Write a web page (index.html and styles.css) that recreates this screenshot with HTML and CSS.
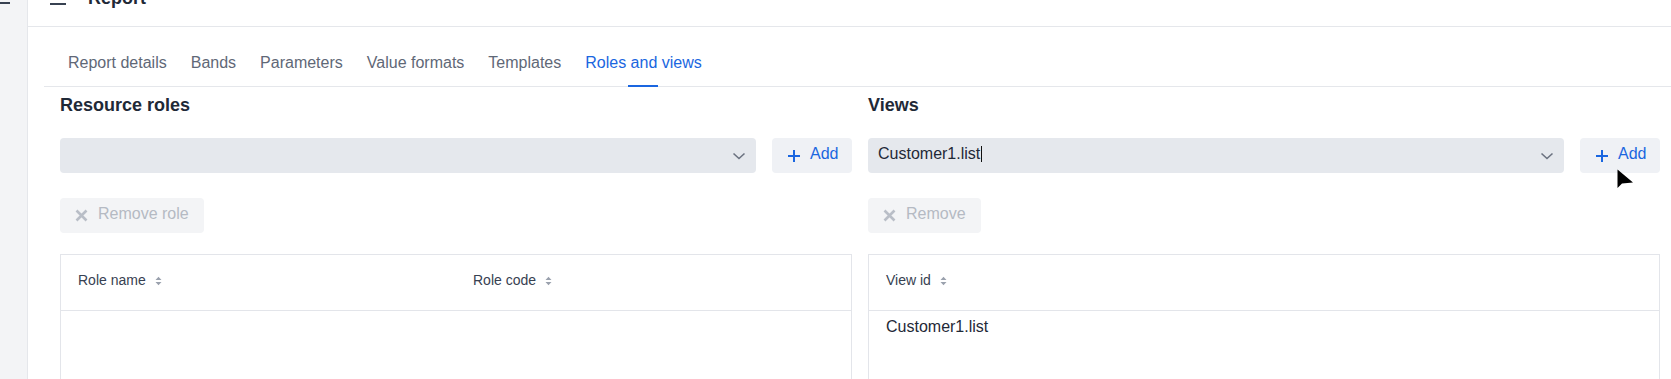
FILE: index.html
```html
<!DOCTYPE html>
<html lang="en">
<head>
  <meta charset="UTF-8">
  <title>Report - Roles and views</title>
  <link rel="stylesheet" href="styles.css">
</head>
<body>
  <div class="app">
    <aside class="sidebar">
      <span class="sidebar-mark"></span>
    </aside>

    <div class="main">
      <header class="topbar">
        <span class="menu-line"></span>
        <span class="page-title">Report</span>
      </header>

      <nav class="tabs">
        <a class="tab">Report details</a>
        <a class="tab">Bands</a>
        <a class="tab">Parameters</a>
        <a class="tab">Value formats</a>
        <a class="tab">Templates</a>
        <a class="tab active">Roles and views</a>
      </nav>

      <div class="panels">
        <!-- resource roles -->
        <section class="panel">
          <h2>Resource roles</h2>
          <div class="picker-row">
            <div class="select">
              <span class="select-value"></span>
              <svg class="chevron" width="14" height="8" viewBox="0 0 14 8"><path d="M1.5 1.5 L7 6.5 L12.5 1.5" fill="none" stroke="#6b7280" stroke-width="1.6"/></svg>
            </div>
            <button class="btn-add">
              <svg width="12" height="12" viewBox="0 0 12 12"><path d="M6 0 V12 M0 6 H12" stroke="#1a66e0" stroke-width="2"/></svg>
              <span class="label">Add</span>
            </button>
          </div>
          <button class="btn-remove" disabled>
            <svg width="13" height="13" viewBox="0 0 13 13"><path d="M1.5 1.5 L11.5 11.5 M11.5 1.5 L1.5 11.5" stroke="#b9bec7" stroke-width="2.6"/></svg>
            <span class="label">Remove role</span>
          </button>
          <table class="grid">
            <thead>
              <tr>
                <th>Role name<svg class="sort" width="7" height="10" viewBox="0 0 7 10"><path d="M0.5 4 L3.5 0.8 L6.5 4 Z M0.5 6 L3.5 9.2 L6.5 6 Z" fill="#9aa1ad"/></svg></th>
                <th>Role code<svg class="sort" width="7" height="10" viewBox="0 0 7 10"><path d="M0.5 4 L3.5 0.8 L6.5 4 Z M0.5 6 L3.5 9.2 L6.5 6 Z" fill="#9aa1ad"/></svg></th>
              </tr>
            </thead>
            <tbody>
              <tr><td colspan="2"></td></tr>
            </tbody>
          </table>
        </section>

        <!-- views -->
        <section class="panel">
          <h2>Views</h2>
          <div class="picker-row">
            <div class="select">
              <span class="select-value">Customer1.list<span class="caret"></span></span>
              <svg class="chevron" width="14" height="8" viewBox="0 0 14 8"><path d="M1.5 1.5 L7 6.5 L12.5 1.5" fill="none" stroke="#6b7280" stroke-width="1.6"/></svg>
            </div>
            <button class="btn-add">
              <svg width="12" height="12" viewBox="0 0 12 12"><path d="M6 0 V12 M0 6 H12" stroke="#1a66e0" stroke-width="2"/></svg>
              <span class="label">Add</span>
            </button>
          </div>
          <button class="btn-remove" disabled>
            <svg width="13" height="13" viewBox="0 0 13 13"><path d="M1.5 1.5 L11.5 11.5 M11.5 1.5 L1.5 11.5" stroke="#b9bec7" stroke-width="2.6"/></svg>
            <span class="label">Remove</span>
          </button>
          <table class="grid">
            <thead>
              <tr>
                <th>View id<svg class="sort" width="7" height="10" viewBox="0 0 7 10"><path d="M0.5 4 L3.5 0.8 L6.5 4 Z M0.5 6 L3.5 9.2 L6.5 6 Z" fill="#9aa1ad"/></svg></th>
              </tr>
            </thead>
            <tbody>
              <tr><td>Customer1.list</td></tr>
            </tbody>
          </table>
        </section>
      </div>
    </div>
  </div>

  <!-- mouse pointer over the Add button -->
  <svg class="pointer" width="17" height="21" viewBox="0 0 17 21"><path d="M0.5 0.5 L0.5 19 L5 14.5 L16 13.5 Z" fill="#000"/></svg>
</body>
</html>
```

FILE: styles.css
```css
body {
  margin: 0;
  font-family: "Liberation Sans", Arial, sans-serif;
  background: #fff;
  color: #1f2937;
  overflow: hidden;
}
.app {
  display: flex;
  min-height: 379px;
}
.sidebar {
  width: 27px;
  flex-shrink: 0;
  background: #f3f4f6;
  border-right: 1px solid #e5e7eb;
}
.sidebar-mark {
  display: block;
  width: 10px;
  height: 2px;
  margin-top: 2px;
  background: #374151;
}
.main {
  flex: 1;
  min-width: 0;
}

/* top bar, scrolled mostly out of view */
.topbar {
  height: 26px;
  display: flex;
  align-items: flex-start;
  border-bottom: 1px solid #e5e7eb;
  overflow: hidden;
}
.menu-line {
  width: 16px;
  height: 2px;
  margin: 3px 0 0 22px;
  background: #374151;
}
.page-title {
  margin: -11px 0 0 22px;
  font-size: 18px;
  line-height: 18px;
  font-weight: bold;
  color: #1f2937;
}

/* tabs */
.tabs {
  display: flex;
  margin-left: 16px;
  padding: 24px 0 0 12px;
  border-bottom: 1px solid #e5e7eb;
}
.tab {
  position: relative;
  padding: 0 12px 11px;
  font-size: 16px;
  line-height: 24px;
  color: #5f6877;
  cursor: pointer;
}
.tab.active {
  color: #1a66e0;
}
.tab.active::after {
  content: "";
  position: absolute;
  left: 50%;
  bottom: -1px;
  width: 30px;
  height: 2px;
  margin-left: -16px;
  background: #1a66e0;
}

/* two columns */
.panels {
  display: grid;
  grid-template-columns: 1fr 1fr;
  gap: 16px;
  padding: 0 11px 0 32px;
}
.panel h2 {
  margin: 6px 0 0;
  font-size: 18px;
  line-height: 24px;
  color: #1f2937;
}
.picker-row {
  display: flex;
  gap: 16px;
  margin-top: 21px;
}
.select {
  flex: 1;
  height: 35px;
  display: flex;
  align-items: center;
  justify-content: space-between;
  padding: 0 10px;
  background: #e5e8ed;
  border-radius: 4px;
}
.select-value {
  margin-bottom: 4px;
  font-size: 16px;
  color: #1f2937;
}
.caret {
  display: inline-block;
  width: 1px;
  height: 16px;
  margin-left: 1px;
  vertical-align: -3px;
  background: #111;
}
button {
  font-family: inherit;
  border: none;
  border-radius: 4px;
  cursor: pointer;
}
button .label {
  margin-bottom: 4px;
}
.btn-add {
  width: 80px;
  height: 35px;
  display: flex;
  align-items: center;
  gap: 10px;
  padding: 0 0 0 16px;
  font-size: 16px;
  color: #1a66e0;
  background: #eff1f5;
}
.btn-remove {
  height: 35px;
  display: flex;
  align-items: center;
  gap: 10px;
  margin-top: 25px;
  padding: 0 15px;
  font-size: 16px;
  color: #b5bac3;
  background: #f3f4f6;
  cursor: default;
}

/* tables */
.grid {
  width: 100%;
  margin-top: 21px;
  border-collapse: collapse;
  table-layout: fixed;
  border: 1px solid #e3e5ea;
}
.grid th {
  padding: 15px 17px 20px;
  font-size: 14px;
  line-height: 20px;
  font-weight: normal;
  text-align: left;
  color: #374151;
  border-bottom: 1px solid #e3e5ea;
}
.grid td {
  height: 80px;
  padding: 6px 17px;
  font-size: 16px;
  line-height: 20px;
  vertical-align: top;
  color: #1f2937;
}
.sort {
  margin-left: 9px;
  vertical-align: -1px;
}

.pointer {
  position: absolute;
  left: 1617px;
  top: 169px;
}
```
